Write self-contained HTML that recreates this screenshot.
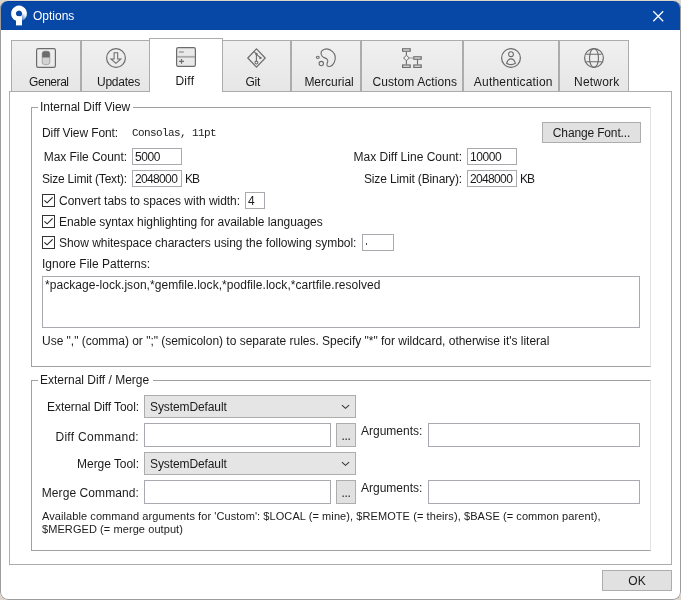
<!DOCTYPE html>
<html><head><meta charset="utf-8">
<style>
*{margin:0;padding:0;box-sizing:border-box}
html,body{width:681px;height:600px;overflow:hidden;background:#dcd6cc}
body{font-family:"Liberation Sans",sans-serif;font-size:12px;color:#1b1b1b;position:relative}
#win{position:absolute;left:0;top:0;width:681px;height:600px;background:#fff;clip-path:inset(1px 0 0 0 round 8px);will-change:transform}
#frame{position:absolute;left:0;top:1px;width:681px;height:599px;border:1px solid #9c9c9c;border-top:none;border-radius:8px;z-index:20}
#title{position:absolute;left:0;top:0;width:681px;height:30px;background:#0747a6;box-shadow:inset 0 2px 0 #0241a2}
.a{position:absolute}
.t{position:absolute;white-space:nowrap;line-height:14px;font-size:12px}
.r{text-align:right}
.tab{position:absolute;top:40px;height:52px;border:1px solid #acacac;border-bottom:none;background:linear-gradient(#f0f0f0,#e6e6e6)}
.tab.sel{top:38px;height:54px;background:#fff;z-index:3}
#page{position:absolute;left:9px;top:91px;width:663px;height:474px;border:1px solid #acacac;background:#fff;z-index:2}
#layer{position:absolute;left:0;top:0;width:681px;height:600px;z-index:5}
.grp{position:absolute;border:1px solid #a0a0a0;border-right-color:#e3e3e3}
.gt{position:absolute;background:#fff;line-height:14px;white-space:nowrap}
.tb{position:absolute;border:1px solid #a9a9b0;background:#fff}
.btn{position:absolute;border:1px solid #adadad;background:#e1e1e1;text-align:center;white-space:nowrap}
.cb{position:absolute;width:13px;height:13px;border:1px solid #333;background:#fff}
.combo{position:absolute;border:1px solid #adadad;background:#e5e5e5}
svg{position:absolute;overflow:visible}
</style></head>
<body>
<div id="win">
<div id="title">
<svg style="left:0;top:0" width="40" height="30" viewBox="0 0 40 30">
 <defs>
  <linearGradient id="lg" gradientUnits="userSpaceOnUse" x1="26.5" y1="13.5" x2="20.5" y2="20.5"><stop offset="0.15" stop-color="#fff"/><stop offset="1" stop-color="#222"/></linearGradient>
  <mask id="m" maskUnits="userSpaceOnUse" x="0" y="0" width="40" height="30"><rect x="0" y="0" width="40" height="30" fill="#fff"/><rect x="19" y="13.5" width="10" height="10" fill="url(#lg)"/></mask>
 </defs>
 <path d="M19 5.6a7.9 7.9 0 1 0 0.01 0z M19 10.4a3.1 3.1 0 1 1 -0.01 0z" fill="#fff" fill-rule="evenodd" mask="url(#m)"/>
 <rect x="16" y="16.2" width="6" height="9.2" fill="#fff"/>
</svg>
<div class="t" style="left:33px;top:9px;color:#fff">Options</div>
<svg style="left:0;top:0" width="681" height="30"><path d="M653.3 11.3L663.2 21.2M663.2 11.3L653.3 21.2" stroke="#fff" stroke-width="1.3"/></svg>
</div>
<div class="tab" style="left:11px;width:70px"></div>
<div class="tab" style="left:81px;width:69px"></div>
<div class="tab" style="left:222px;width:69px"></div>
<div class="tab" style="left:291px;width:70px"></div>
<div class="tab" style="left:361px;width:102px"></div>
<div class="tab" style="left:463px;width:96px"></div>
<div class="tab" style="left:559px;width:70px"></div>
<div class="tab sel" style="left:149px;width:74px"></div>
<div id="page"></div>
<div id="layer"><svg style="left:0;top:0" width="681" height="100">
 <g fill="none" stroke="#6c6c6c" stroke-width="1.2">
  <rect x="36.6" y="48.6" width="18.8" height="18.8" rx="1.6"/>
  <circle cx="116" cy="58" r="9.4"/>
  <path d="M114.1 52.7H117.7V58.9H120.9L115.9 63.4L110.9 58.9H114.1Z" stroke-width="1.05"/>
  <rect x="176.6" y="47.6" width="18.8" height="18.8" rx="1.6" fill="#e9e9e9"/>
  <path d="M247.8 58L256.5 48.8L265.2 58L256.5 67.2Z" stroke-linejoin="round"/>
  <path d="M253.8 51.3L256.4 53.9V61.2M256.4 54.2L260.4 57.8" stroke-width="1.1"/>
  <path d="M321.3 54.6C320.6 52.3 321.8 50.2 324 49.4C326.8 48.4 330.3 49.4 332.6 51.6C335.3 54.2 335.8 58.6 334.4 62C333.3 64.6 331.2 66.5 328.8 66.5C327.6 66.5 326.7 65.6 326.9 64.4C327.1 62.9 328.2 61.6 327.7 60.1C327.1 58.5 325.3 58 323.8 57.4C322.6 56.8 321.7 55.9 321.3 54.6Z" stroke-width="1.1"/>
  <ellipse cx="317.8" cy="57.3" rx="1.5" ry="1.1" stroke-width="1.05"/>
  <circle cx="321.3" cy="63.6" r="2.2" stroke-width="1.1"/>
  <rect x="402.6" y="48.8" width="7.6" height="2.4"/>
  <rect x="413.8" y="56.8" width="7.4" height="2.4"/>
  <rect x="402.6" y="65" width="7.6" height="2.4"/>
  <rect x="413.8" y="65" width="7.4" height="2.4"/>
  <path d="M406.4 51.6V55.3M406.4 60.7V64.6M417.5 59.6V64.6" stroke-width="1.1"/>
  <path d="M406.4 55.2L409.2 58L406.4 60.8L403.6 58Z" stroke-width="1.0"/>
  <path d="M409.2 58H413.2" stroke="#999" stroke-width="1.0"/>
  <circle cx="511" cy="58" r="9.4"/>
  <circle cx="511" cy="54.2" r="2.4" stroke-width="1.1"/>
  <path d="M506.6 63.3C507.3 60.6 509 58.9 511 58.9C513 58.9 514.7 60.6 515.4 63.3C514 64.3 512.5 64.6 511 64.6C509.5 64.6 508 64.3 506.6 63.3Z" stroke-width="1.1"/>
  <circle cx="594" cy="58" r="9.4"/>
  <ellipse cx="594" cy="58" rx="4.5" ry="9.4" stroke-width="1.1"/>
  <path d="M586.3 54.2H601.7M586.3 61.8H601.7" stroke-width="1.1"/>
 </g>
 <rect x="42.2" y="51.2" width="7.6" height="13.4" rx="2.4" fill="#d2d2d2" stroke="#a0a0a0" stroke-width="0.9"/>
 <path d="M42.2 57.6V53.6a2.4 2.4 0 0 1 2.4 -2.4h2.8a2.4 2.4 0 0 1 2.4 2.4V57.6z" fill="#6c6c6c"/>
 <rect x="177" y="55.9" width="18" height="1.8" fill="#a9a9a9"/>
 <rect x="179" y="51.2" width="4.8" height="1.6" fill="#a6a6a6"/>
 <path d="M179 61.4H184M181.5 59V63.8" stroke="#6c6c6c" stroke-width="1.2"/>
 <circle cx="256.4" cy="53.9" r="1.2" fill="#6c6c6c"/>
 <circle cx="260.4" cy="57.9" r="1.2" fill="#6c6c6c"/>
 <circle cx="256.4" cy="62.6" r="1.45" fill="#eee" stroke="#6c6c6c" stroke-width="1.05"/>
</svg>
<div class="t" style="left:-51.2px;width:200px;text-align:center;top:75px;letter-spacing:-0.45px">General</div>
<div class="t" style="left:18.5px;width:200px;text-align:center;top:75px;letter-spacing:-0.25px">Updates</div>
<div class="t" style="left:84.9px;width:200px;text-align:center;top:74px;letter-spacing:0.3px">Diff</div>
<div class="t" style="left:152.8px;width:200px;text-align:center;top:75px;letter-spacing:-0.2px">Git</div>
<div class="t" style="left:229.05px;width:200px;text-align:center;top:75px;letter-spacing:0px">Mercurial</div>
<div class="t" style="left:314.85px;width:200px;text-align:center;top:75px;letter-spacing:0.1px">Custom Actions</div>
<div class="t" style="left:413.29999999999995px;width:200px;text-align:center;top:75px;letter-spacing:0.2px">Authentication</div>
<div class="t" style="left:496.79999999999995px;width:200px;text-align:center;top:75px;letter-spacing:0.2px">Network</div>
<div class="grp" style="left:31px;top:107px;width:620px;height:260px"></div>
<div class="gt" style="left:38px;top:100px;width:95px;padding-left:2px">Internal Diff View</div>
<div class="t" style="left:42px;top:126px;letter-spacing:-0.1px">Diff View Font:</div>
<div class="t" style="left:132px;top:126px;font-family:'Liberation Mono',monospace;font-size:11px;letter-spacing:-0.6px">Consolas, 11pt</div>
<div class="btn" style="left:542px;top:122px;width:99px;height:21px;line-height:20px;letter-spacing:-0.15px">Change Font...</div>
<div class="t r" style="left:-173px;width:300px;top:150px;letter-spacing:-0.05px">Max File Count:</div>
<div class="tb" style="left:132px;top:148px;width:50px;height:17px"></div><div class="t" style="left:135px;top:150px;letter-spacing:-0.45px">5000</div>
<div class="t r" style="left:162px;width:300px;top:150px;">Max Diff Line Count:</div>
<div class="tb" style="left:467px;top:148px;width:50px;height:17px"></div><div class="t" style="left:470px;top:150px;letter-spacing:-0.45px">10000</div>
<div class="t r" style="left:-173px;width:300px;top:172px;letter-spacing:-0.2px">Size Limit (Text):</div>
<div class="tb" style="left:132px;top:170px;width:50px;height:17px"></div><div class="t" style="left:135px;top:172px;letter-spacing:-0.65px">2048000</div>
<div class="t" style="left:185px;top:172px;letter-spacing:-1px">KB</div>
<div class="t r" style="left:162px;width:300px;top:172px;letter-spacing:-0.13px">Size Limit (Binary):</div>
<div class="tb" style="left:467px;top:170px;width:50px;height:17px"></div><div class="t" style="left:470px;top:172px;letter-spacing:-0.65px">2048000</div>
<div class="t" style="left:520px;top:172px;letter-spacing:-1px">KB</div>
<div class="cb" style="left:42px;top:194px"><svg style="left:0;top:0" width="11" height="11" viewBox="0 0 11 11"><path d="M1.4 5.3L4.1 7.8L9.6 2.4" fill="none" stroke="#222" stroke-width="1.15"/></svg></div>
<div class="cb" style="left:42px;top:215px"><svg style="left:0;top:0" width="11" height="11" viewBox="0 0 11 11"><path d="M1.4 5.3L4.1 7.8L9.6 2.4" fill="none" stroke="#222" stroke-width="1.15"/></svg></div>
<div class="cb" style="left:42px;top:236px"><svg style="left:0;top:0" width="11" height="11" viewBox="0 0 11 11"><path d="M1.4 5.3L4.1 7.8L9.6 2.4" fill="none" stroke="#222" stroke-width="1.15"/></svg></div>
<div class="t" style="left:59px;top:194px;letter-spacing:-0.03px">Convert tabs to spaces with width:</div>
<div class="tb" style="left:245px;top:192px;width:20px;height:17px"></div><div class="t" style="left:248px;top:194px;">4</div>
<div class="t" style="left:59px;top:215px;letter-spacing:-0.05px">Enable syntax highlighting for available languages</div>
<div class="t" style="left:59px;top:236px;letter-spacing:-0.04px">Show whitespace characters using the following symbol:</div>
<div class="tb" style="left:362px;top:234px;width:32px;height:17px"></div><div class="a" style="left:366px;top:243px;width:1px;height:1.5px;background:#444"></div>
<div class="t" style="left:42px;top:257px;">Ignore File Patterns:</div>
<div class="tb" style="left:42px;top:276px;width:598px;height:52px"></div><div class="t" style="left:45px;top:278px;letter-spacing:0.05px">*package-lock.json,*gemfile.lock,*podfile.lock,*cartfile.resolved</div>
<div class="t" style="left:42px;top:334px;letter-spacing:-0.02px">Use "," (comma) or ";" (semicolon) to separate rules. Specify "*" for wildcard, otherwise it's literal</div>
<div class="grp" style="left:31px;top:380px;width:620px;height:171px"></div>
<div class="gt" style="left:38px;top:373px;width:115px;padding-left:2px">External Diff / Merge</div>
<div class="t r" style="left:-161px;width:300px;top:400px;letter-spacing:-0.09px">External Diff Tool:</div>
<div class="combo" style="left:144px;top:395px;width:212px;height:23px"></div><div class="t" style="left:150px;top:400px;letter-spacing:-0.1px">SystemDefault</div><svg style="left:0;top:0" width="681" height="600"><path d="M341.9 405.2L345.5 408.3L349.09999999999997 405.2" fill="none" stroke="#333" stroke-width="1.05"/></svg>
<div class="t r" style="left:-161px;width:300px;top:430px;letter-spacing:0.29px">Diff Command:</div>
<div class="tb" style="left:144px;top:423px;width:187px;height:24px"></div>
<div class="btn" style="left:336px;top:423px;width:20px;height:24px;line-height:25px;letter-spacing:-0.4px">...</div>
<div class="t" style="left:361px;top:424px;">Arguments:</div>
<div class="tb" style="left:428px;top:423px;width:212px;height:24px"></div>
<div class="t r" style="left:-161px;width:300px;top:457px;letter-spacing:-0.05px">Merge Tool:</div>
<div class="combo" style="left:144px;top:452px;width:212px;height:23px"></div><div class="t" style="left:150px;top:457px;letter-spacing:-0.1px">SystemDefault</div><svg style="left:0;top:0" width="681" height="600"><path d="M341.9 462.2L345.5 465.3L349.09999999999997 462.2" fill="none" stroke="#333" stroke-width="1.05"/></svg>
<div class="t r" style="left:-161px;width:300px;top:486px;letter-spacing:0.09px">Merge Command:</div>
<div class="tb" style="left:144px;top:480px;width:187px;height:24px"></div>
<div class="btn" style="left:336px;top:480px;width:20px;height:24px;line-height:25px;letter-spacing:-0.4px">...</div>
<div class="t" style="left:361px;top:481px;">Arguments:</div>
<div class="tb" style="left:428px;top:480px;width:212px;height:24px"></div>
<div class="t" style="left:42px;top:510px;font-size:11px;line-height:13px;letter-spacing:0.08px">Available command arguments for 'Custom': $LOCAL (= mine), $REMOTE (= theirs), $BASE (= common parent),</div>
<div class="t" style="left:42px;top:523px;font-size:11px;line-height:13px;letter-spacing:0.08px">$MERGED (= merge output)</div>
<div class="btn" style="left:602px;top:570px;width:70px;height:21px;line-height:20px">OK</div></div>
<div id="frame"></div>
</div>
</body></html>
